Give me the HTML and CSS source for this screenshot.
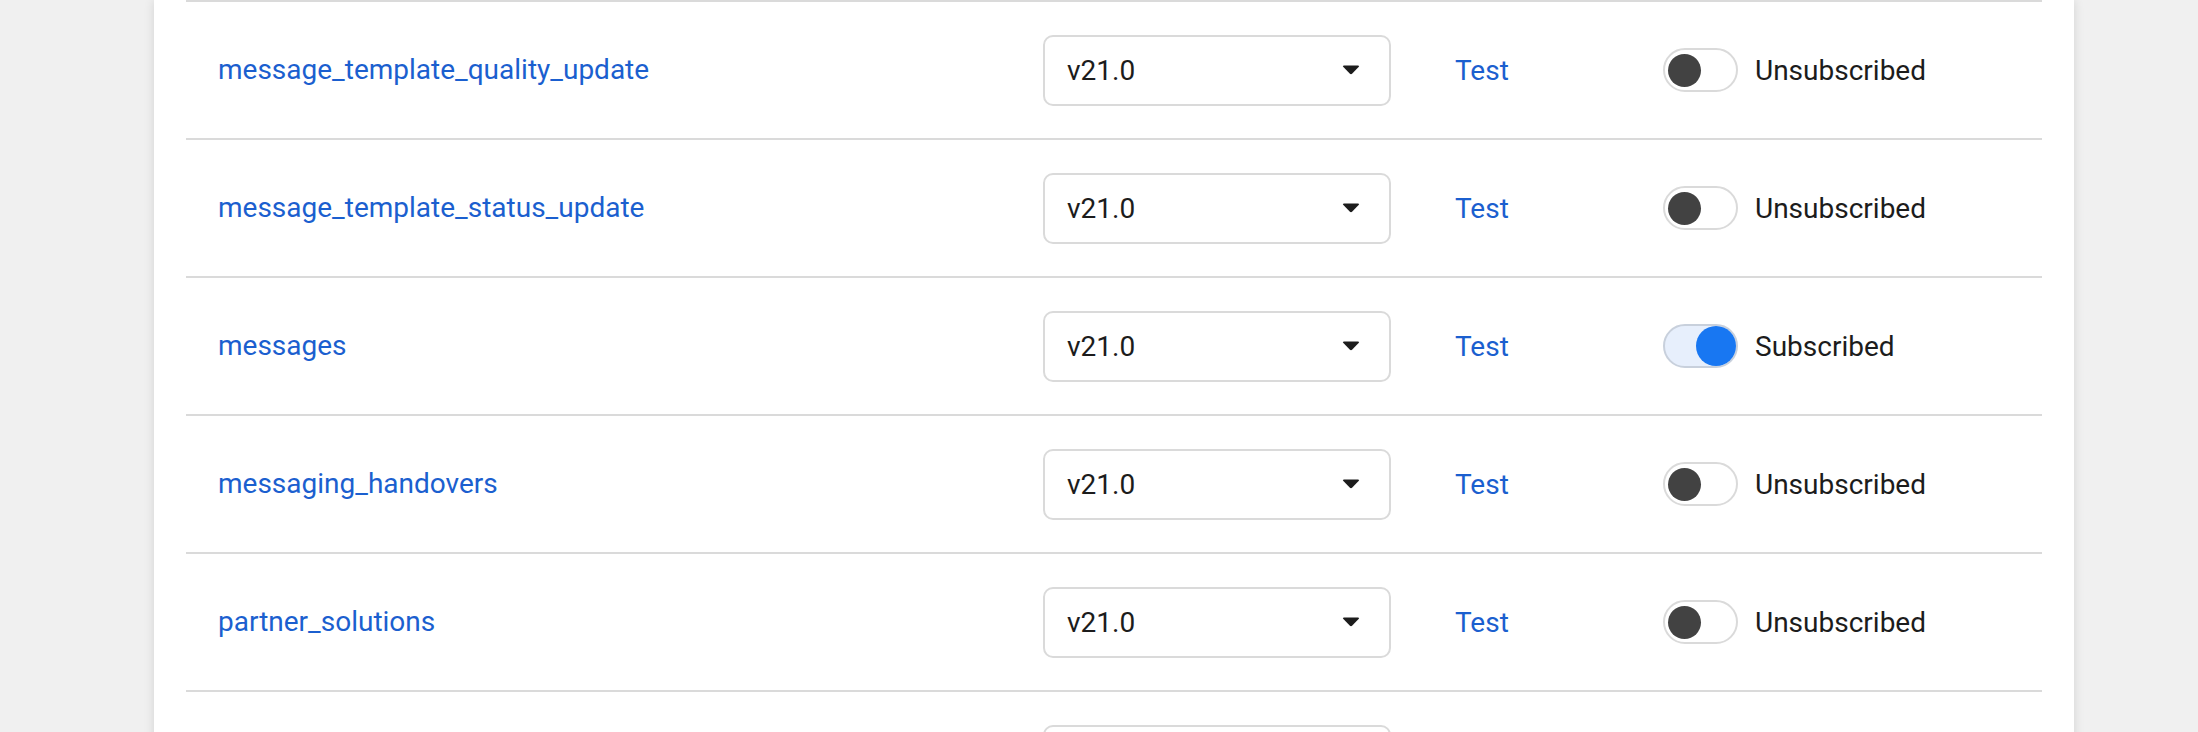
FILE: index.html
```html
<!DOCTYPE html>
<html lang="en">
<head>
<meta charset="utf-8">
<title>Webhook fields</title>
<link rel="stylesheet" href="styles.css">
</head>
<body>
<div class="page">
  <div class="card">
    <div class="list">
      <div class="row">
        <a class="field" href="#">message_template_quality_update</a>
        <div class="select"><span>v21.0</span><svg class="caret" width="18" height="10" viewBox="0 0 18 10"><path d="M2 0.5 H16 Q18 0.5 16.6 2 L10.3 8.6 Q9 9.8 7.7 8.6 L1.4 2 Q0 0.5 2 0.5 Z" fill="#1c1c1c"/></svg></div>
        <div class="test"><a href="#">Test</a></div>
        <div class="status"><span class="switch"><span class="knob"></span></span><span class="label">Unsubscribed</span></div>
      </div>
      <div class="row">
        <a class="field" href="#">message_template_status_update</a>
        <div class="select"><span>v21.0</span><svg class="caret" width="18" height="10" viewBox="0 0 18 10"><path d="M2 0.5 H16 Q18 0.5 16.6 2 L10.3 8.6 Q9 9.8 7.7 8.6 L1.4 2 Q0 0.5 2 0.5 Z" fill="#1c1c1c"/></svg></div>
        <div class="test"><a href="#">Test</a></div>
        <div class="status"><span class="switch"><span class="knob"></span></span><span class="label">Unsubscribed</span></div>
      </div>
      <div class="row">
        <a class="field" href="#">messages</a>
        <div class="select"><span>v21.0</span><svg class="caret" width="18" height="10" viewBox="0 0 18 10"><path d="M2 0.5 H16 Q18 0.5 16.6 2 L10.3 8.6 Q9 9.8 7.7 8.6 L1.4 2 Q0 0.5 2 0.5 Z" fill="#1c1c1c"/></svg></div>
        <div class="test"><a href="#">Test</a></div>
        <div class="status"><span class="switch on"><span class="knob"></span></span><span class="label">Subscribed</span></div>
      </div>
      <div class="row">
        <a class="field" href="#">messaging_handovers</a>
        <div class="select"><span>v21.0</span><svg class="caret" width="18" height="10" viewBox="0 0 18 10"><path d="M2 0.5 H16 Q18 0.5 16.6 2 L10.3 8.6 Q9 9.8 7.7 8.6 L1.4 2 Q0 0.5 2 0.5 Z" fill="#1c1c1c"/></svg></div>
        <div class="test"><a href="#">Test</a></div>
        <div class="status"><span class="switch"><span class="knob"></span></span><span class="label">Unsubscribed</span></div>
      </div>
      <div class="row">
        <a class="field" href="#">partner_solutions</a>
        <div class="select"><span>v21.0</span><svg class="caret" width="18" height="10" viewBox="0 0 18 10"><path d="M2 0.5 H16 Q18 0.5 16.6 2 L10.3 8.6 Q9 9.8 7.7 8.6 L1.4 2 Q0 0.5 2 0.5 Z" fill="#1c1c1c"/></svg></div>
        <div class="test"><a href="#">Test</a></div>
        <div class="status"><span class="switch"><span class="knob"></span></span><span class="label">Unsubscribed</span></div>
      </div>
      <div class="row">
        <span class="field"></span>
        <div class="select"></div>
      </div>
    </div>
  </div>
</div>
</body>
</html>
```

FILE: styles.css
```css
html, body {
  margin: 0;
  padding: 0;
}
body {
  background: #f0f0f0;
  font-family: Roboto, "Liberation Sans", Arial, sans-serif;
  font-size: 28px;
  color: #1c1c1c;
  overflow: hidden;
  height: 732px;
}
.page {
  padding-left: 154px;
  width: 1920px;
}
.card {
  background: #ffffff;
  box-shadow: 0 0 10px rgba(0, 0, 0, 0.12);
  padding: 0 32px;
  min-height: 900px;
}
.list {
  display: flex;
  flex-direction: column;
}
.row {
  border-top: 2px solid #dadada;
  height: 136px;
  display: grid;
  grid-template-columns: 857px 348px 272px 1fr;
  align-items: center;
}
.field {
  padding-left: 32px;
  color: #1b5fcf;
  text-decoration: none;
  line-height: 32px;
}
.select {
  box-sizing: border-box;
  height: 71px;
  border: 2px solid #dadada;
  border-radius: 10px;
  display: flex;
  align-items: center;
  justify-content: space-between;
  padding: 0 29px 0 22px;
  color: #1c1c1c;
}
.caret {
  display: block;
}
.test {
  padding-left: 64px;
}
.test a {
  color: #1b5fcf;
  text-decoration: none;
}
.status {
  display: flex;
  align-items: center;
  gap: 17px;
}
.switch {
  box-sizing: border-box;
  width: 75px;
  height: 44px;
  border: 2px solid #dadada;
  border-radius: 22px;
  background: #ffffff;
  display: flex;
  align-items: center;
  padding-left: 3px;
}
.knob {
  width: 33px;
  height: 33px;
  border-radius: 50%;
  background: #424242;
}
.switch.on {
  background: #e7effc;
  border-color: #c8d0dc;
  justify-content: flex-end;
  padding: 0;
}
.switch.on .knob {
  width: 40px;
  height: 40px;
  background: #1877f2;
}
.label {
  color: #1c1c1c;
}
```
